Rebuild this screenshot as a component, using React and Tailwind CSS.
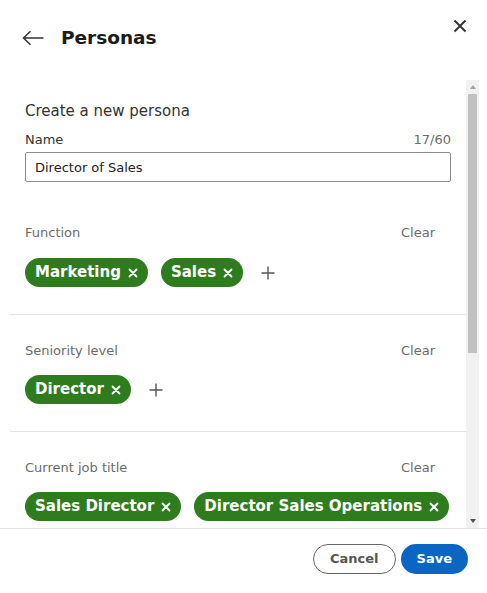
import { useState } from "react";

const XIcon = () => (
  <svg viewBox="0 0 10 10" className="w-[10px] h-[10px]" fill="none" stroke="currentColor" strokeWidth="1.8" strokeLinecap="round">
    <path d="M1.5 1.5l7 7M8.5 1.5l-7 7" />
  </svg>
);

const PlusButton = () => (
  <button className="ml-[5px] w-[14px] h-[14px] text-[#555]">
    <svg viewBox="0 0 14 14" className="w-[14px] h-[14px]" fill="none" stroke="currentColor" strokeWidth="1.4">
      <path d="M7 0.5v13M0.5 7h13" />
    </svg>
  </button>
);

const Chip = ({ label }) => (
  <span className="inline-flex items-center h-[29px] pl-[10px] pr-[10px] rounded-full bg-[#2f7c1e] text-white text-[15px] font-bold gap-[7px]">
    {label}
    <XIcon />
  </span>
);

const Section = ({ title, chips, first = false }) => (
  <div className={`px-[15px] ${first ? "pt-[42px]" : "pt-[27px]"} pb-[27px] border-b border-[#e3e3e3]`}>
    <div className="flex items-center justify-between h-[18px] text-[13px] text-[#6b6b6b]">
      <span>{title}</span>
      <button className="mr-[16px] text-[13px] text-[#6b6b6b]">Clear</button>
    </div>
    <div className={`flex flex-wrap items-center gap-[13px] ${first ? "mt-[16px]" : "mt-[15px]"}`}>
      {chips.map((c) => (
        <Chip key={c} label={c} />
      ))}
      <PlusButton />
    </div>
  </div>
);

// the page's scrollbar, drawn so it shows in the screenshot
const ScrollBar = () => (
  <div className="w-[13px] shrink-0 bg-[#f1f1f1] flex flex-col">
    <div className="h-[14px] flex items-center justify-center text-[#a3a3a3]">
      <svg viewBox="0 0 6 4" className="w-[6px] h-[4px]" fill="currentColor">
        <path d="M3 0L6 4H0z" />
      </svg>
    </div>
    <div className="h-[259px] mx-[2px] bg-[#c1c1c1]" />
    <div className="flex-1" />
    <div className="h-[14px] flex items-center justify-center text-[#505050]">
      <svg viewBox="0 0 6 4" className="w-[6px] h-[4px]" fill="currentColor">
        <path d="M0 0H6L3 4z" />
      </svg>
    </div>
  </div>
);

export default function App() {
  const [name, setName] = useState("Director of Sales");

  return (
    <div className="w-[487px] h-[593px] bg-white flex flex-col font-['DejaVu_Sans',sans-serif] relative">
      {/* Header */}
      <div className="h-[80px] shrink-0 flex items-start pt-[26px] pl-[22px]">
        <button className="w-[22px] h-[24px] text-[#333] flex items-center">
          <svg viewBox="0 0 22 16" className="w-[22px] h-[16px]" fill="none" stroke="currentColor" strokeWidth="1.5">
            <path d="M1.5 8H21.5M8.5 1.2L1.5 8l7 6.8" />
          </svg>
        </button>
        <h1 className="ml-[17px] text-[18.5px] leading-[24px] font-bold text-[#1b1b1b]">Personas</h1>
      </div>
      <button className="absolute top-[19px] right-[20px] w-[14px] h-[14px] text-[#333]">
        <svg viewBox="0 0 14 14" className="w-[14px] h-[14px]" fill="none" stroke="currentColor" strokeWidth="2">
          <path d="M1.5 1.5l11 11M12.5 1.5l-11 11" />
        </svg>
      </button>

      {/* Scrollable form */}
      <div className="ml-[10px] mr-[8px] h-[448px] shrink-0 flex">
        <div className="flex-1 min-w-0 overflow-y-auto [scrollbar-width:none]">
          <div className="px-[15px] pt-[21px]">
            <h2 className="text-[15px] leading-[20px] text-[#333]">Create a new persona</h2>
            <div className="flex items-center justify-between mt-[10px] h-[18px] text-[13px]">
              <label className="text-[#333]">Name</label>
              <span className="text-[#6b6b6b]">{name.length}/60</span>
            </div>
            <input
              value={name}
              onChange={(e) => setName(e.target.value)}
              className="mt-[3px] w-full h-[30px] border border-[#8c8c8c] rounded-[2px] px-[9px] text-[13px] text-[#222] outline-none"
            />
          </div>
          <Section title="Function" chips={["Marketing", "Sales"]} first />
          <Section title="Seniority level" chips={["Director"]} />
          <Section title="Current job title" chips={["Sales Director", "Director Sales Operations"]} />
          <div className="h-[233px]" />
        </div>
        <ScrollBar />
      </div>

      {/* Footer */}
      <div className="flex-1 border-t border-[#e3e3e3] flex items-center justify-end gap-[5px] pr-[19px] pb-[4px]">
        <button className="h-[30px] px-[16px] rounded-full border border-[#666] text-[13px] font-bold text-[#555]">
          Cancel
        </button>
        <button className="h-[30px] px-[16px] rounded-full bg-[#0a66c2] text-[13px] font-bold text-white">
          Save
        </button>
      </div>
    </div>
  );
}
